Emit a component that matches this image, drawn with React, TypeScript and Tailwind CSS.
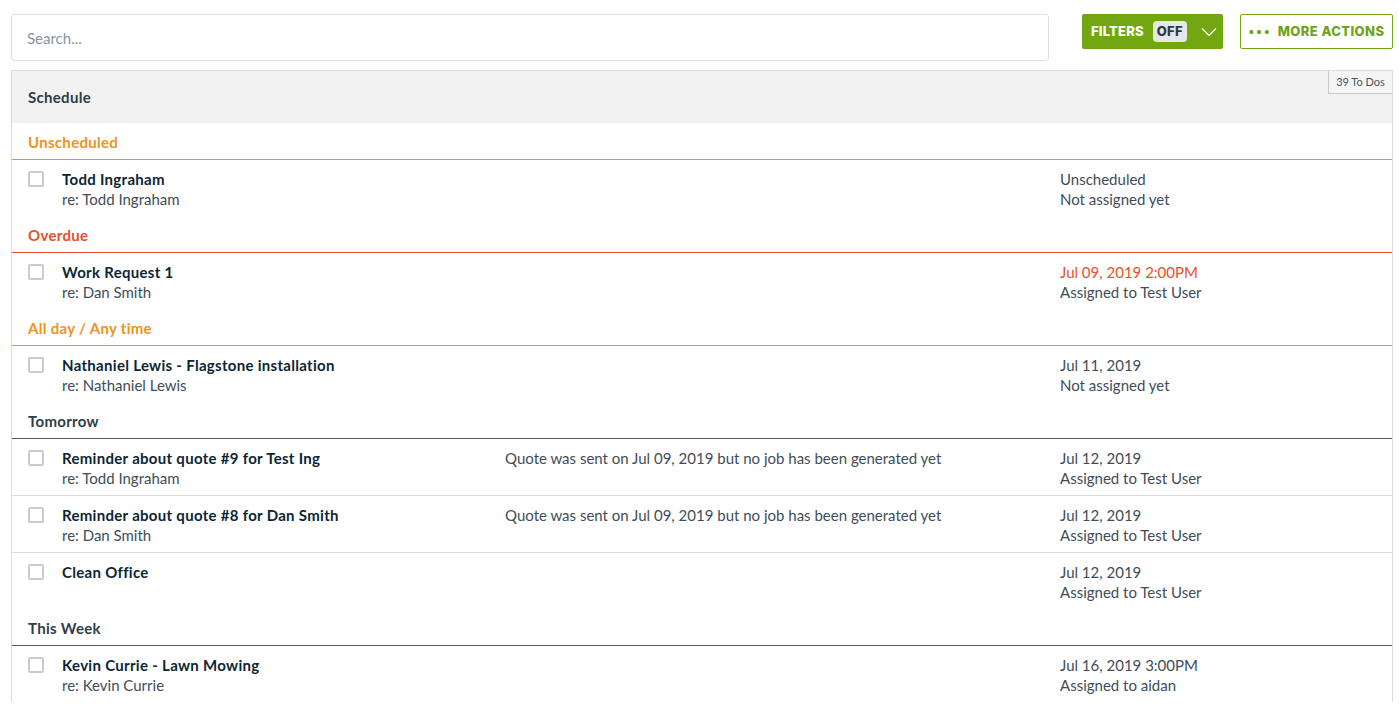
import React from 'react';

type Item = {
  title: string;
  re?: string;
  note?: string;
  when: string;
  whenTone?: 'late';
  who: string;
};

type Section = {
  label: string;
  tone: 'orange' | 'red' | 'slate';
  items: Item[];
};

const sections: Section[] = [
  {
    label: 'Unscheduled',
    tone: 'orange',
    items: [{ title: 'Todd Ingraham', re: 'Todd Ingraham', when: 'Unscheduled', who: 'Not assigned yet' }],
  },
  {
    label: 'Overdue',
    tone: 'red',
    items: [
      { title: 'Work Request 1', re: 'Dan Smith', when: 'Jul 09, 2019 2:00PM', whenTone: 'late', who: 'Assigned to Test User' },
    ],
  },
  {
    label: 'All day / Any time',
    tone: 'orange',
    items: [
      { title: 'Nathaniel Lewis - Flagstone installation', re: 'Nathaniel Lewis', when: 'Jul 11, 2019', who: 'Not assigned yet' },
    ],
  },
  {
    label: 'Tomorrow',
    tone: 'slate',
    items: [
      {
        title: 'Reminder about quote #9 for Test Ing',
        re: 'Todd Ingraham',
        note: 'Quote was sent on Jul 09, 2019 but no job has been generated yet',
        when: 'Jul 12, 2019',
        who: 'Assigned to Test User',
      },
      {
        title: 'Reminder about quote #8 for Dan Smith',
        re: 'Dan Smith',
        note: 'Quote was sent on Jul 09, 2019 but no job has been generated yet',
        when: 'Jul 12, 2019',
        who: 'Assigned to Test User',
      },
      { title: 'Clean Office', when: 'Jul 12, 2019', who: 'Assigned to Test User' },
    ],
  },
  {
    label: 'This Week',
    tone: 'slate',
    items: [
      { title: 'Kevin Currie - Lawn Mowing', re: 'Kevin Currie', when: 'Jul 16, 2019 3:00PM', who: 'Assigned to aidan' },
    ],
  },
];

const toneText = {
  orange: 'text-[#f3911d]',
  red: 'text-[#ea4f2c]',
  slate: 'text-[#2f3d47]',
};

const toneLine = {
  orange: 'border-[#f3911d]',
  red: 'border-[#ea4f2c]',
  slate: 'border-[#4d5c67]',
};

function Row({ item }: { item: Item }) {
  return (
    <div className="flex min-h-[56px] pb-[7px] pl-4 pt-[9px] text-[15px] leading-5">
      <div className="mt-[2px] mr-[18px] h-[16px] w-[16px] shrink-0 rounded-[2px] border-2 border-[#cbcbcb] bg-white" />
      <div className="w-[443px] shrink-0">
        <div className="font-bold tracking-[0.3px] text-[#0c2634]">{item.title}</div>
        {item.re && <div className="text-[#3f4d58]">re: {item.re}</div>}
      </div>
      <div className="w-[555px] shrink-0 text-[#3f4d58]">{item.note}</div>
      <div className="flex-1">
        <div className={item.whenTone === 'late' ? 'text-[#ea4f2c]' : 'text-[#3f4d58]'}>{item.when}</div>
        <div className="text-[#3f4d58]">{item.who}</div>
      </div>
    </div>
  );
}

export default function App() {
  return (
    <div className="min-h-screen bg-white pl-[11px] pr-[6px] pt-[14px]" style={{ fontFamily: 'Lato, "Noto Sans", sans-serif' }}>
      <div className="flex items-start">
        <div className="flex h-[47px] flex-1 items-center rounded-[3px] border border-[#e0e0e0] px-[15px] pt-[2px] text-[15px] text-[#8796a0]">
          Search...
        </div>
        <button className="ml-[33px] flex h-[35px] w-[141px] items-center rounded-[2px] bg-[#73a712] pl-[9px] text-[13px] font-extrabold tracking-[0.2px] text-white" style={{ fontFamily: 'Inter, sans-serif' }}>
          FILTERS
          <span className="ml-[9px] rounded-[4px] bg-[#e4e8eb] px-[4px] py-[1px] text-[13px] text-[#2c3a45]">OFF</span>
          <svg className="ml-[14px]" width="16" height="10" viewBox="0 0 16 10" fill="none">
            <path d="M1 1.5 8 8.5 15 1.5" stroke="white" strokeWidth="1.2" />
          </svg>
        </button>
        <button className="ml-[17px] flex h-[35px] w-[153px] items-center justify-center rounded-[2px] border border-[#73a712] bg-white text-[13px] font-extrabold tracking-[0.4px] text-[#6ea31a]" style={{ fontFamily: 'Inter, sans-serif' }}>
          <span className="mr-[6px] tracking-[2px]">•••</span>MORE ACTIONS
        </button>
      </div>

      <div className="relative mt-[9px] border-x border-t border-[#dcdcdc]">
        <div className="flex h-[52px] items-center bg-[#f1f1f1] px-4 pt-[1px] text-[15px] font-bold tracking-[0.3px] text-[#2f3d47]">Schedule</div>
        <div className="absolute right-0 top-0 flex h-[23px] w-[64px] items-center justify-center border-b border-l border-[#c8c8c8] bg-[#f5f5f5] text-[11px] text-[#4a5660]">
          39 To Dos
        </div>
        {sections.map((s) => (
          <div key={s.label}>
            <div className={`flex h-[37px] items-center border-b px-4 pt-[2px] text-[15px] font-bold tracking-[0.3px] ${toneText[s.tone]} ${toneLine[s.tone]}`}>
              {s.label}
            </div>
            <div className="divide-y divide-[#dedede]">
              {s.items.map((it) => (
                <Row key={it.title} item={it} />
              ))}
            </div>
          </div>
        ))}
      </div>
    </div>
  );
}
